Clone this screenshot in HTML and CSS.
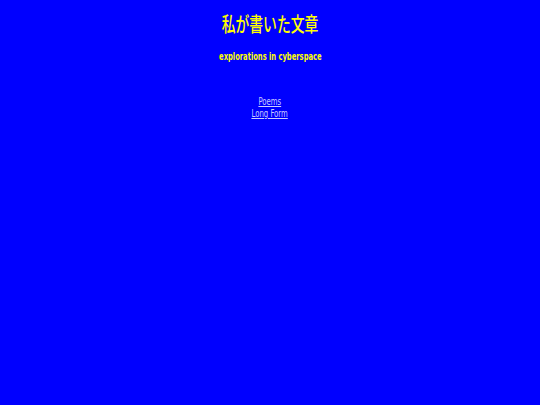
FILE: index.html
```html
<!DOCTYPE html>
<html>
<head>
<meta charset="utf-8">
<link rel="stylesheet" href="styles.css">
</head>
<body>
<div class="page">
  <h1 class="title"><span class="squeeze">私が書いた文章</span></h1>
  <p class="subtitle"><span class="narrow tight">explorations in cyberspace</span></p>
  <ul class="links">
    <li><a class="narrow" href="#">Poems</a></li>
    <li><a class="narrow" href="#">Long Form</a></li>
  </ul>
</div>
</body>
</html>
```
FILE: styles.css
```css
html, body {
  margin: 0;
  padding: 0;
  background: #0000ff;
}
.page {
  display: flex;
  flex-direction: column;
  align-items: center;
  font-family: "DejaVu Sans Condensed", "DejaVu Sans", sans-serif;
  padding-top: 12px;
}
.title {
  margin: 0;
  font-family: "Noto Sans CJK JP", sans-serif;
  font-weight: 500;
  font-size: 20px;
  line-height: 24px;
  color: #ffff00;
}
.squeeze {
  display: inline-block;
  transform: scaleX(0.69);
}
.narrow {
  display: inline-block;
  transform: scaleX(0.77);
}
.narrow.tight {
  transform: scaleX(0.75);
}
.subtitle {
  margin: 15px 0 0;
  font-size: 10px;
  line-height: 12px;
  font-weight: bold;
  color: #ffff00;
}
.links {
  list-style: none;
  margin: 33px 0 0;
  padding: 0;
  text-align: center;
  font-size: 10px;
  line-height: 12px;
}
.links a {
  color: #ccccff;
}
```
